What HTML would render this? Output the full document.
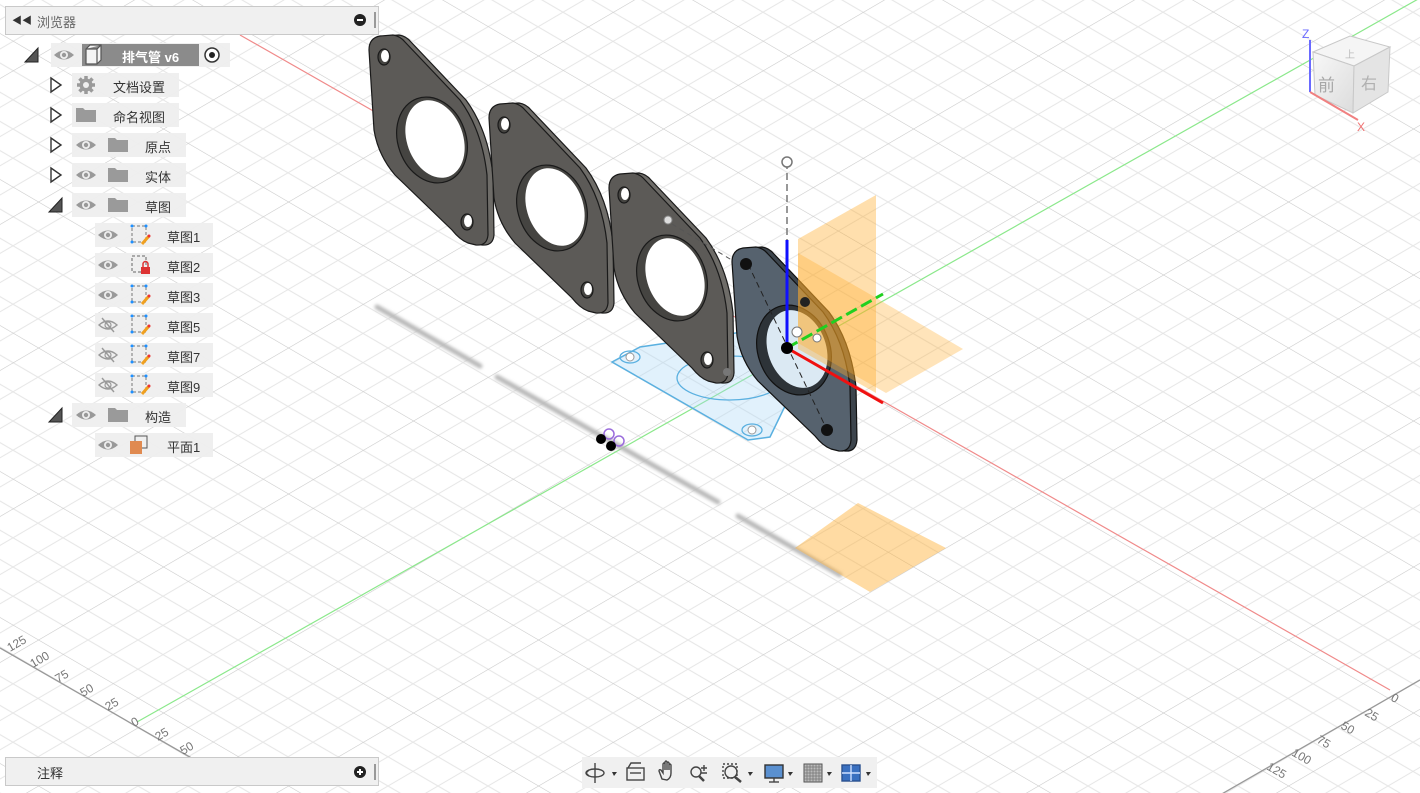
<!DOCTYPE html>
<html><head><meta charset="utf-8"><style>
*{margin:0;padding:0;box-sizing:border-box}
body{width:1420px;height:793px;overflow:hidden;background:#fff;font-family:"Liberation Sans","Noto Sans CJK SC",sans-serif;position:relative}
svg.scene{position:absolute;left:0;top:0}
.hdr{position:absolute;left:5px;top:6px;width:374px;height:29px;background:#f0f0f0;border:1px solid #c9c9c9;font-size:13px;color:#666}
.row{position:absolute;height:24px;background:rgba(238,238,238,.95);font-size:13px;color:#333}
.row span{position:absolute;top:4px}
</style></head><body>
<svg class="scene" width="1420" height="793" viewBox="0 0 1420 793">
<defs>
<pattern id="g" width="125" height="125" patternUnits="userSpaceOnUse" patternTransform="matrix(1,0.584,1,-0.584,1038,348)">
<g stroke="#e6e6e6" stroke-width="1">
<line x1="25" y1="0" x2="25" y2="125"/><line x1="50" y1="0" x2="50" y2="125"/><line x1="75" y1="0" x2="75" y2="125"/><line x1="100" y1="0" x2="100" y2="125"/>
<line y1="25" x1="0" y2="25" x2="125"/><line y1="50" x1="0" y2="50" x2="125"/><line y1="75" x1="0" y2="75" x2="125"/><line y1="100" x1="0" y2="100" x2="125"/>
</g>
<g stroke="#c8c8c8" stroke-width="1.1"><line x1="0" y1="0" x2="0" y2="125"/><line x1="0" y1="0" x2="125" y2="0"/></g>
</pattern>
<filter id="bl"><feGaussianBlur stdDeviation="1.5"/></filter>
<linearGradient id="cg" x1="0" y1="0" x2="1" y2="1"><stop offset="0" stop-color="#f8f8f8"/><stop offset="1" stop-color="#dcdcdc"/></linearGradient>
</defs>
<rect width="1420" height="793" fill="url(#g)"/>
<line x1="240" y1="35" x2="1390" y2="690" stroke="#f08a8a" stroke-width="1.2"/>
<line x1="137" y1="722" x2="1420" y2="-2" stroke="#8be88b" stroke-width="1.2"/>
<line x1="0" y1="648" x2="195" y2="760" stroke="#999" stroke-width="1.3"/>
<line x1="1420" y1="680" x2="1220" y2="795" stroke="#999" stroke-width="1.3"/>
<g font-size="12" fill="#777" font-family="Liberation Sans">
<text transform="translate(10,652) rotate(-30)">125</text>
<text transform="translate(33,668) rotate(-30)">100</text>
<text transform="translate(58,683) rotate(-30)">75</text>
<text transform="translate(83,697) rotate(-30)">50</text>
<text transform="translate(108,711) rotate(-30)">25</text>
<text transform="translate(134,727) rotate(-30)">0</text>
<text transform="translate(158,741) rotate(-30)">25</text>
<text transform="translate(183,755) rotate(-30)">50</text>
<text transform="translate(1390,700) rotate(30)">0</text>
<text transform="translate(1364,715) rotate(30)">25</text>
<text transform="translate(1340,728) rotate(30)">50</text>
<text transform="translate(1316,742) rotate(30)">75</text>
<text transform="translate(1291,755) rotate(30)">100</text>
<text transform="translate(1266,769) rotate(30)">125</text>
</g>
<g stroke="#b8b8b8" stroke-width="5" filter="url(#bl)" stroke-linecap="round">
<line x1="377" y1="307" x2="480" y2="366"/><line x1="497" y1="377" x2="718" y2="502"/><line x1="738" y1="516" x2="840" y2="575"/>
</g>
<polygon points="795,548 858,503 946,548 870,592" fill="rgba(255,175,50,.45)"/>
<polygon points="612,362 640,347 790,325 788,400 770,437 748,440" fill="rgba(170,215,245,.35)" stroke="#5ab0e0" stroke-width="1.5"/>
<ellipse cx="730" cy="378" rx="53" ry="22" fill="none" stroke="#5ab0e0" stroke-width="1.3"/>
<ellipse cx="630" cy="357" rx="10" ry="6" fill="none" stroke="#5ab0e0" stroke-width="1.3"/><circle cx="630" cy="357" r="4" fill="#fff" stroke="#999"/>
<ellipse cx="752" cy="430" rx="10" ry="6" fill="none" stroke="#5ab0e0" stroke-width="1.3"/><circle cx="752" cy="430" r="4" fill="#fff" stroke="#999"/>
<g id="p" stroke="#1a1a1a" stroke-width="1.2">
<path d="M375,50 Q375,38 386,36 L399,35 Q406,36 411,42 L466,100 Q488,130 493,175 L494,235 Q493,246 482,245 L474,243 Q466,240 458,230 L401,175 Q384,155 380,130 Z" fill="#6e6c68"/>
<path d="M369,50 Q369,38 380,36 L393,35 Q400,36 405,42 L460,100 Q482,130 487,175 L488,235 Q487,246 476,245 L468,243 Q460,240 452,230 L395,175 Q378,155 374,130 Z" fill="#5c5a57"/>
<ellipse cx="432" cy="140" rx="34" ry="44" transform="rotate(-20 432 140)" fill="#454441"/>
<ellipse cx="435" cy="139" rx="28" ry="40" transform="rotate(-20 435 139)" fill="#fff" stroke="none"/>
<ellipse cx="384" cy="57" rx="6" ry="8" fill="#454441"/><ellipse cx="385" cy="56" rx="4" ry="6" fill="#fff" stroke="none"/>
<ellipse cx="467" cy="222" rx="6" ry="8" fill="#454441"/><ellipse cx="468" cy="221" rx="4" ry="6" fill="#fff" stroke="none"/>
</g>
<use href="#p" x="120" y="68"/>
<use href="#p" x="240" y="138"/>
<circle cx="668" cy="220" r="4" fill="#ddd" stroke="#888"/>
<line x1="672" y1="224" x2="735" y2="262" stroke="#555" stroke-dasharray="5,4"/>
<!-- plate 4 -->
<g stroke="#111" stroke-width="1.2">
<path d="M738,262 Q738,250 749,248 L762,247 Q769,248 774,254 L829,312 Q851,342 856,387 L857,440 Q856,452 845,451 L837,449 Q829,446 821,436 L764,381 Q747,361 743,336 Z" fill="#3c444c"/>
<path d="M732,262 Q732,250 743,248 L756,247 Q763,248 768,254 L823,312 Q845,342 850,387 L851,440 Q850,452 839,451 L831,449 Q823,446 815,436 L758,381 Q741,361 737,336 Z" fill="#56626e"/>
<ellipse cx="794" cy="350" rx="36" ry="46" transform="rotate(-20 794 350)" fill="#2d3338"/>
<ellipse cx="797" cy="349" rx="29" ry="40" transform="rotate(-20 797 349)" fill="#dbe9f3" stroke="none"/>
</g>
<line x1="748" y1="264" x2="828" y2="432" stroke="#222" stroke-dasharray="6,4"/>
<circle cx="746" cy="264" r="6" fill="#111"/><circle cx="827" cy="430" r="6" fill="#111"/>
<polygon points="798,239 876,195 876,393 798,349" fill="rgba(255,170,40,.38)"/>
<polygon points="798,253 866,292 963,349 886,393 798,343" fill="rgba(255,170,40,.32)"/>
<line x1="787" y1="162" x2="787" y2="240" stroke="#777" stroke-width="1.5" stroke-dasharray="7,4"/>
<circle cx="787" cy="162" r="5" fill="#fff" stroke="#777" stroke-width="1.5"/>
<line x1="787" y1="240" x2="787" y2="348" stroke="#1010ff" stroke-width="3"/>
<line x1="787" y1="348" x2="883" y2="403" stroke="#f01010" stroke-width="3"/>
<line x1="787" y1="348" x2="883" y2="294" stroke="#20d020" stroke-width="3" stroke-dasharray="12,5"/>
<circle cx="787" cy="348" r="6" fill="#000"/><circle cx="805" cy="302" r="5" fill="#222"/>
<circle cx="797" cy="332" r="5" fill="#fff" stroke="#777"/><circle cx="817" cy="338" r="4" fill="#fff" stroke="#777"/>
<circle cx="727" cy="372" r="4" fill="#777"/>
<circle cx="609" cy="434" r="5" stroke="#9a6cdc" stroke-width="1.5" fill="none"/><circle cx="619" cy="441" r="5" stroke="#9a6cdc" stroke-width="1.5" fill="none"/>
<circle cx="601" cy="439" r="5" fill="#000"/><circle cx="611" cy="446" r="5" fill="#000"/>
<!-- view cube -->
<g>
<polygon points="1313,52 1350,36 1390,47 1354,66" fill="#f5f5f5" stroke="#c8c8c8"/>
<polygon points="1313,52 1354,66 1353,113 1315,95" fill="url(#cg)" stroke="#c8c8c8"/>
<polygon points="1354,66 1390,47 1388,92 1353,113" fill="#e4e4e4" stroke="#c8c8c8"/>
<text x="1345" y="58" font-size="10" fill="#bbb" font-family="Noto Sans CJK SC">上</text>
<text x="1318" y="91" font-size="17" fill="#a8a8a8" font-family="Noto Sans CJK SC">前</text>
<text x="1361" y="89" font-size="16" fill="#b0b0b0" font-family="Noto Sans CJK SC">右</text>
<line x1="1310" y1="40" x2="1310" y2="92" stroke="#6a6aff" stroke-width="2"/>
<line x1="1310" y1="92" x2="1358" y2="120" stroke="#f08080" stroke-width="2"/>
<text x="1302" y="38" font-size="12" fill="#6a6aff">Z</text>
<text x="1357" y="131" font-size="12" fill="#f07070">X</text>
</g>
</svg>

<div class="hdr"><span style="position:absolute;left:6px;top:5px;font-size:10px;color:#333">◀◀</span><span style="position:absolute;left:31px;top:5px">浏览器</span>
<span style="position:absolute;left:348px;top:7px;width:12px;height:12px;border-radius:50%;background:#222"></span><span style="position:absolute;left:351px;top:12px;width:6px;height:2px;background:#fff"></span><span style="position:absolute;left:368px;top:5px;width:2px;height:16px;border-left:1px solid #999;border-right:1px solid #999"></span></div>

<svg class="scene" width="400" height="470" style="pointer-events:none">
<defs>
<g id="eye"><path d="M-10,0 Q0,-9 10,0 Q0,9 -10,0Z" fill="#999"/><circle r="4" fill="#eee"/><circle r="2.2" fill="#999"/></g>
<g id="eyex"><path d="M-9,0 Q0,-8 9,0 Q0,8 -9,0Z" fill="none" stroke="#999" stroke-width="1.4"/><circle r="3" fill="none" stroke="#999" stroke-width="1.2"/><line x1="-6" y1="-7" x2="6" y2="7" stroke="#999" stroke-width="1.4"/></g>
<g id="fold"><path d="M-10,-7 h7 l2,2 h11 v12 h-20z" fill="#9a9a9a"/></g>
<g id="tr"><polygon points="-5,-7 5,0 -5,7" fill="#fff" stroke="#333" stroke-width="1.4"/></g>
<g id="td"><polygon points="6,-7 6,7 -7,7" fill="#555" stroke="#222"/></g>
<g id="sk"><rect x="-8" y="-9" width="14" height="16" fill="none" stroke="#777" stroke-dasharray="3,2"/><circle cx="-8" cy="-9" r="1.5" fill="#1e90ff"/><circle cx="6" cy="-9" r="1.5" fill="#1e90ff"/><circle cx="-8" cy="7" r="1.5" fill="#1e90ff"/><path d="M2,9 L9,1" stroke="#f0a020" stroke-width="3"/><circle cx="9" cy="1" r="1.5" fill="#e33"/></g>
</defs>
</svg>

<div class="row" style="left:51px;top:43px;width:179px"></div>
<div style="position:absolute;left:82px;top:44px;width:117px;height:22px;background:#8b8b8b;color:#fff;font-weight:bold;font-size:13px"><span style="position:absolute;left:40px;top:3px">排气管 v6</span></div>
<div class="row" style="left:72px;top:73px;width:107px"><span style="left:41px">文档设置</span></div>
<div class="row" style="left:72px;top:103px;width:107px"><span style="left:41px">命名视图</span></div>
<div class="row" style="left:72px;top:133px;width:114px"><span style="left:73px">原点</span></div>
<div class="row" style="left:72px;top:163px;width:114px"><span style="left:73px">实体</span></div>
<div class="row" style="left:72px;top:193px;width:114px"><span style="left:73px">草图</span></div>
<div class="row" style="left:95px;top:223px;width:118px"><span style="left:72px">草图1</span></div>
<div class="row" style="left:95px;top:253px;width:118px"><span style="left:72px">草图2</span></div>
<div class="row" style="left:95px;top:283px;width:118px"><span style="left:72px">草图3</span></div>
<div class="row" style="left:95px;top:313px;width:118px"><span style="left:72px">草图5</span></div>
<div class="row" style="left:95px;top:343px;width:118px"><span style="left:72px">草图7</span></div>
<div class="row" style="left:95px;top:373px;width:118px"><span style="left:72px">草图9</span></div>
<div class="row" style="left:72px;top:403px;width:114px"><span style="left:73px">构造</span></div>
<div class="row" style="left:95px;top:433px;width:118px"><span style="left:72px">平面1</span></div>

<svg class="scene" width="400" height="470">
<use href="#td" x="32" y="55"/>
<use href="#eye" x="64" y="55"/>
<path d="M86,49 l4,-4 h11 v15 l-4,4 h-11z M86,49 h11 l4,-4 M97,49 v15" fill="#f4f4f4" stroke="#555" stroke-width="1.2"/>
<circle cx="212" cy="55" r="7" fill="#fff" stroke="#333" stroke-width="1.5"/><circle cx="212" cy="55" r="3" fill="#222"/>
<use href="#tr" x="56" y="85"/><use href="#tr" x="56" y="115"/><use href="#tr" x="56" y="145"/><use href="#tr" x="56" y="175"/><use href="#td" x="56" y="205"/><use href="#td" x="56" y="415"/>
<g transform="translate(86,85)" fill="#9a9a9a"><circle r="6.5"/><g stroke="#9a9a9a" stroke-width="3.5"><line x1="0" y1="-9" x2="0" y2="9"/><line x1="-9" y1="0" x2="9" y2="0"/><line x1="-6.5" y1="-6.5" x2="6.5" y2="6.5"/><line x1="-6.5" y1="6.5" x2="6.5" y2="-6.5"/></g><circle r="3" fill="#eee"/></g>
<use href="#fold" x="86" y="115"/>
<use href="#eye" x="86" y="145"/><use href="#fold" x="118" y="145"/>
<use href="#eye" x="86" y="175"/><use href="#fold" x="118" y="175"/>
<use href="#eye" x="86" y="205"/><use href="#fold" x="118" y="205"/>
<use href="#eye" x="108" y="235"/><use href="#sk" x="140" y="235"/>
<use href="#eye" x="108" y="265"/><g transform="translate(140,265)"><rect x="-8" y="-9" width="14" height="16" fill="none" stroke="#666" stroke-dasharray="3,2"/><rect x="1" y="2" width="9" height="7" fill="#d33"/><path d="M3,2 v-3 a2.5,2.5 0 0 1 5,0 v3" fill="none" stroke="#d33" stroke-width="1.5"/></g>
<use href="#eye" x="108" y="295"/><use href="#sk" x="140" y="295"/>
<use href="#eyex" x="108" y="325"/><use href="#sk" x="140" y="325"/>
<use href="#eyex" x="108" y="355"/><use href="#sk" x="140" y="355"/>
<use href="#eyex" x="108" y="385"/><use href="#sk" x="140" y="385"/>
<use href="#eye" x="86" y="415"/><use href="#fold" x="118" y="415"/>
<use href="#eye" x="108" y="445"/>
<rect x="135" y="436" width="12" height="12" fill="none" stroke="#555"/><rect x="130" y="441" width="12" height="13" fill="#e08a50"/>
</svg>

<div class="hdr" style="top:757px;height:29px"><span style="position:absolute;left:31px;top:5px;color:#333">注释</span>
<span style="position:absolute;left:348px;top:8px;width:12px;height:12px;border-radius:50%;background:#222"></span><span style="position:absolute;left:351px;top:13px;width:6px;height:2px;background:#fff"></span><span style="position:absolute;left:353px;top:11px;width:2px;height:6px;background:#fff"></span><span style="position:absolute;left:368px;top:6px;width:2px;height:16px;border-left:1px solid #999;border-right:1px solid #999"></span></div>

<div style="position:absolute;left:582px;top:757px;width:295px;height:31px;background:#f0f0f0"></div>
<svg class="scene" width="1420" height="793">
<g transform="translate(0,773)" stroke="#444" fill="none" stroke-width="1.4">
<line x1="595" y1="-10" x2="595" y2="10"/><ellipse cx="595" cy="0" rx="9" ry="4"/><path d="M586,0 l3,-3 M586,0 l3,3"/>
<polygon points="612,-1 617,-1 614,3" fill="#333" stroke="none"/>
<rect x="627" y="-5" width="17" height="12"/><line x1="630" y1="0" x2="641" y2="0"/><path d="M628,-5 l3,-5 h10"/>
<path d="M662,6 l-3,-8 q0,-2 2,-1 l2,3 v-9 q1,-2 2,0 v6 v-8 q1,-2 2,0 v8 v-7 q1,-2 2,0 v7 v-5 q1,-2 2,0 v8 q0,5 -4,7z"/>
<circle cx="696" cy="-1" r="5"/><line x1="699" y1="3" x2="704" y2="8" stroke-width="2.5"/><path d="M704,-8 v6 M701,-5 h6 M701,0 h6"/>
<rect x="723" y="-9" width="14" height="14" stroke-dasharray="2,2"/><circle cx="731" cy="-1" r="6"/><line x1="735" y1="4" x2="741" y2="9" stroke-width="2.5"/>
<polygon points="748,-1 753,-1 750,3" fill="#333" stroke="none"/>
<rect x="765" y="-8" width="18" height="13" fill="#5a90d0" stroke="#333"/><line x1="774" y1="5" x2="774" y2="9"/><line x1="769" y1="9" x2="779" y2="9"/>
<polygon points="788,-1 793,-1 790,3" fill="#333" stroke="none"/>
<rect x="804" y="-9" width="18" height="18" fill="#bbb" stroke="#555" stroke-width="1"/>
<path d="M807,-9v18M810,-9v18M813,-9v18M816,-9v18M819,-9v18M804,-6h18M804,-3h18M804,0h18M804,3h18M804,6h18" stroke="#777" stroke-width="0.8"/>
<polygon points="827,-1 832,-1 829,3" fill="#333" stroke="none"/>
<rect x="842" y="-8" width="18" height="16" fill="#3a70c0" stroke="#2a5090"/><path d="M851,-8v16M842,0h18" stroke="#cfe0ff"/>
<polygon points="866,-1 871,-1 868,3" fill="#333" stroke="none"/>
</g>
</svg>
</body></html>
